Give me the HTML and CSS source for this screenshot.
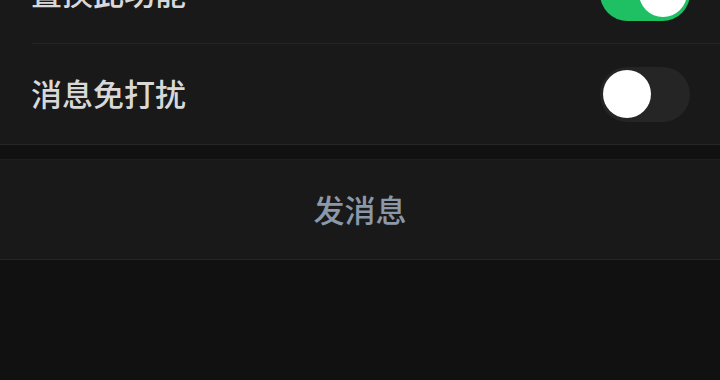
FILE: index.html
```html
<!DOCTYPE html>
<html lang="zh">
<head>
<meta charset="utf-8">
<link rel="stylesheet" href="styles.css">
</head>
<body>
<div class="list">
  <div class="row">
    <span class="label">置换此功能</span>
    <span class="toggle on"><span class="knob"></span></span>
  </div>
  <div class="row">
    <span class="label">消息免打扰</span>
    <span class="toggle"><span class="knob"></span></span>
  </div>
</div>
<div class="action">
  <span class="action-text">发消息</span>
</div>
</body>
</html>
```
FILE: styles.css
```css
html, body {
  margin: 0;
  padding: 0;
  background: #111111;
  font-family: "Noto Sans CJK SC", "Noto Sans", sans-serif;
}
body {
  width: 720px;
  height: 380px;
  overflow: hidden;
}
.list {
  margin-top: -57px;
  background: #191919;
  padding-left: 31px;
  border-bottom: 1px solid #262626;
}
.row {
  height: 100px;
  display: flex;
  align-items: center;
  justify-content: space-between;
  padding-right: 30px;
  box-sizing: border-box;
}
.row + .row {
  border-top: 1px solid #252525;
  height: 101px;
  margin-left: 1px;
}
.row + .row .label {
  margin-left: -1px;
}
.label {
  font-size: 31px;
  font-weight: 500;
  color: #d8d8d8;
  line-height: 1;
  padding-bottom: 3px;
}
.toggle {
  width: 90px;
  height: 55px;
  border-radius: 28px;
  background: #252525;
  display: flex;
  align-items: center;
  padding: 0 3px;
  box-sizing: border-box;
}
.toggle.on {
  background: #1ec063;
  justify-content: flex-end;
}
.knob {
  width: 48px;
  height: 48px;
  border-radius: 50%;
  background: #ffffff;
}
.action {
  margin-top: 14px;
  height: 101px;
  box-sizing: border-box;
  border-top: 1px solid #1e1e1e;
  border-bottom: 1px solid #262626;
  background: #191919;
  display: flex;
  align-items: center;
  justify-content: center;
}
.action-text {
  font-size: 31px;
  font-weight: 500;
  color: #8a98aa;
  line-height: 1;
  padding-bottom: 2px;
}
```
